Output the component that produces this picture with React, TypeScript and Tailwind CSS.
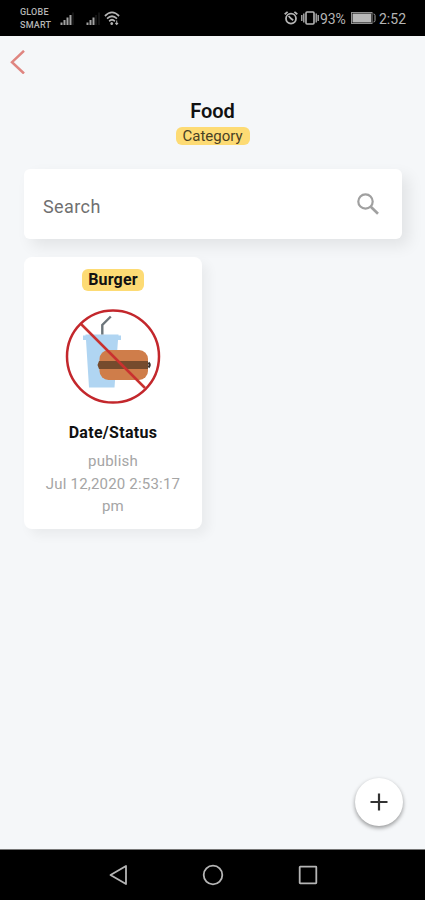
import type { ReactNode } from "react";

type FoodItem = {
  name: string;
  status: string;
  date: string;
};

const items: FoodItem[] = [
  {
    name: "Burger",
    status: "publish",
    date: "Jul 12,2020 2:53:17 pm",
  },
];

function SignalIcon({ bars }: { bars: number }) {
  return (
    <svg width="16" height="14" viewBox="0 0 16 14" fill="#a3a3a3">
      {[0, 1, 2, 3, 4].map((i) => (
        <rect
          key={i}
          x={i * 3 + 0.5}
          y={10.5 - i * 2.5}
          width={i < bars ? 2 : 1}
          height={2.5 + i * 2.5}
          opacity={i < bars ? 1 : 0.25}
        />
      ))}
    </svg>
  );
}

function WifiIcon() {
  return (
    <svg
      width="16"
      height="15"
      viewBox="0 0 18 15"
      preserveAspectRatio="none"
      fill="none"
      stroke="#b5b5b5"
      strokeWidth="1.8"
    >
      <path d="M1 5Q9 -2.2 17 5" />
      <path d="M3.4 7.7Q9 2.7 14.6 7.7" />
      <path d="M5.8 10.2Q9 7.4 12.2 10.2" />
      <circle cx="8.7" cy="12.6" r="1.5" fill="#b5b5b5" stroke="none" />
      <path d="M14.3 9.5v4M12.8 12l1.5 1.5 1.5-1.5" strokeWidth="1.1" />
    </svg>
  );
}

function AlarmIcon() {
  return (
    <svg
      width="14"
      height="14"
      viewBox="0 0 14 14"
      fill="none"
      stroke="#b5b5b5"
      strokeWidth="1.8"
    >
      <circle cx="7" cy="7.6" r="5" />
      <path d="M.7 3.2 3.6.9M13.3 3.2 10.4.9M4.6 5 7 7.6l2.2 1.6" />
    </svg>
  );
}

function VibrateIcon() {
  return (
    <svg
      width="18"
      height="14"
      viewBox="0 0 18 14"
      fill="none"
      stroke="#b5b5b5"
      strokeWidth="1.6"
    >
      <rect x="5" y="1" width="8" height="12" rx="1" />
      <path d="M2.8 2.5v9M15.2 2.5v9M.8 4v6M17.2 4v6" strokeWidth="1.3" />
    </svg>
  );
}

function BatteryIcon() {
  return (
    <svg width="25" height="12" viewBox="0 0 25 12">
      <rect x=".5" y=".5" width="20.5" height="11" fill="none" stroke="#8f8f8f" />
      <rect x="1.5" y="1.5" width="18.5" height="9" fill="#b8b8b8" />
      <path d="M22.5 2q1.5 0 1.5 1.5v5q0 1.5-1.5 1.5" fill="none" stroke="#a3a3a3" />
    </svg>
  );
}

function StatusBar() {
  return (
    <div className="flex h-9 shrink-0 items-center bg-black pr-[19px] pl-5 text-[#b5b5b5]">
      <div className="w-10 pt-[2px] text-[9px] leading-[13px] font-medium tracking-[0.2px]">
        <div>GLOBE</div>
        <div>SMART</div>
      </div>
      <div className="flex items-center gap-[10px] pt-0.5">
        <SignalIcon bars={4} />
        <SignalIcon bars={3} />
      </div>
      <div className="ml-[2px]">
        <WifiIcon />
      </div>
      <div className="ml-auto flex items-center text-sm">
        <AlarmIcon />
        <div className="ml-[3px]">
          <VibrateIcon />
        </div>
        <span className="ml-px w-[31px] pt-0.5 tracking-[-0.1px]">93%</span>
        <BatteryIcon />
        <span className="ml-[3px] w-[27px] pt-0.5 whitespace-nowrap">2:52</span>
      </div>
    </div>
  );
}

function Badge({ children, className }: { children: ReactNode; className: string }) {
  return (
    <span className={`flex items-center justify-center rounded-md bg-[#fddb74] ${className}`}>
      {children}
    </span>
  );
}

function NoFoodIcon() {
  return (
    <svg width="96" height="96" viewBox="0 0 96 96" fill="none">
      <path d="M18 27.5h2.5v-1h33v1H56v4.500h-3l-3.500 47.500H24L21 32h-3z" fill="#b0d5f2" />
      <path d="M37.300 26.500v-9.500l8.500-8.500" stroke="#6c757b" strokeWidth="2.400" />
      <rect x="34.500" y="42" width="48.500" height="30" rx="9" fill="#cf7d4a" />
      <path d="M34 53h49v8H34l-1.500-4z" fill="#754b2d" />
      <path d="M83.500 54.500q2.500 2.500 0 5" stroke="#34302e" strokeWidth="2" />
      <circle cx="48" cy="48.500" r="46" stroke="#c3272c" strokeWidth="2.500" />
      <path d="m16 16 64 64" stroke="#c9312f" strokeWidth="2.500" />
    </svg>
  );
}

function FoodCard({ item }: { item: FoodItem }) {
  return (
    <div className="flex h-[272px] w-[178px] flex-col items-center rounded-lg bg-white pt-3 shadow-[6px_6px_12px_rgba(0,0,0,0.05)]">
      <Badge className="h-[22px] w-[62px] text-base font-bold tracking-[0.2px]">{item.name}</Badge>
      <div className="mt-[17px]">
        <NoFoodIcon />
      </div>
      <h2 className="mt-[18px] text-base leading-[22px] font-bold tracking-[0.3px]">
        Date/Status
      </h2>
      <p className="mt-[6px] w-[140px] text-center text-[15px] leading-[22.5px] tracking-[0.2px] text-[#a5a5a5]">
        {item.status}
        <br />
        {item.date}
      </p>
    </div>
  );
}

function NavigationBar() {
  return (
    <div className="flex h-[51px] shrink-0 items-center justify-between border-t border-[#777] bg-black pr-[106px] pb-px pl-[107px]">
      <svg width="22" height="22" viewBox="0 0 22 22" fill="none" stroke="#b5b5b5" strokeWidth="1.800" strokeLinejoin="round">
        <path d="M3.500 11 19 2v18z" />
      </svg>
      <svg width="22" height="22" viewBox="0 0 22 22" fill="none" stroke="#b5b5b5" strokeWidth="1.800">
        <circle cx="11" cy="11" r="9.300" />
      </svg>
      <svg width="22" height="22" viewBox="0 0 22 22" fill="none" stroke="#b5b5b5" strokeWidth="1.800">
        <rect x="2.700" y="2.700" width="16.600" height="16.600" rx=".5" />
      </svg>
    </div>
  );
}

function App() {
  return (
    <div className="flex h-[900px] w-[425px] flex-col bg-[#f5f7f9] font-['Roboto',sans-serif] text-[#111]">
      <StatusBar />

      <main className="flex flex-1 flex-col">
        <button type="button" aria-label="Back" className="mt-[14px] ml-[10px] h-6 w-4">
          <svg width="16" height="24" viewBox="0 0 16 24" fill="none" stroke="#df8580" strokeWidth="2.500">
            <path d="M14 .8 2 12.200 14 23.500" />
          </svg>
        </button>

        <header className="mt-[23px] flex flex-col items-center">
          <h1 className="mb-[2px] text-xl leading-7 font-semibold">Food</h1>
          <Badge className="h-[18px] w-[74px] text-[15px] text-[#493f25]">Category</Badge>
        </header>

        <div className="mt-6 ml-6 flex h-[70px] w-[378px] items-center justify-between rounded-md bg-white pr-[22px] pl-[19px] shadow-[7px_7px_15px_rgba(0,0,0,0.08)]">
          <span className="pt-[5px] text-lg tracking-[0.4px] text-[#707070]">Search</span>
          <svg width="24" height="24" viewBox="0 0 24 24" fill="none" stroke="#a0a0a0" strokeWidth="2.200">
            <circle cx="9.500" cy="9.500" r="7.200" />
            <path d="m14.800 14.800 7.200 7" strokeWidth="2.700" />
          </svg>
        </div>

        <div className="mt-[18px] ml-6">
          {items.map((item) => (
            <FoodCard key={item.name} item={item} />
          ))}
        </div>

        <button
          type="button"
          aria-label="Add"
          className="mt-auto mr-[22px] mb-[23px] flex size-12 items-center justify-center self-end rounded-full bg-white shadow-[0_2px_4px_rgba(0,0,0,0.4)]"
        >
          <svg width="18" height="18" viewBox="0 0 18 18" stroke="#333" strokeWidth="2.200">
            <path d="M9 .5v17M.5 9h17" />
          </svg>
        </button>
      </main>

      <NavigationBar />
    </div>
  );
}

export default App;
